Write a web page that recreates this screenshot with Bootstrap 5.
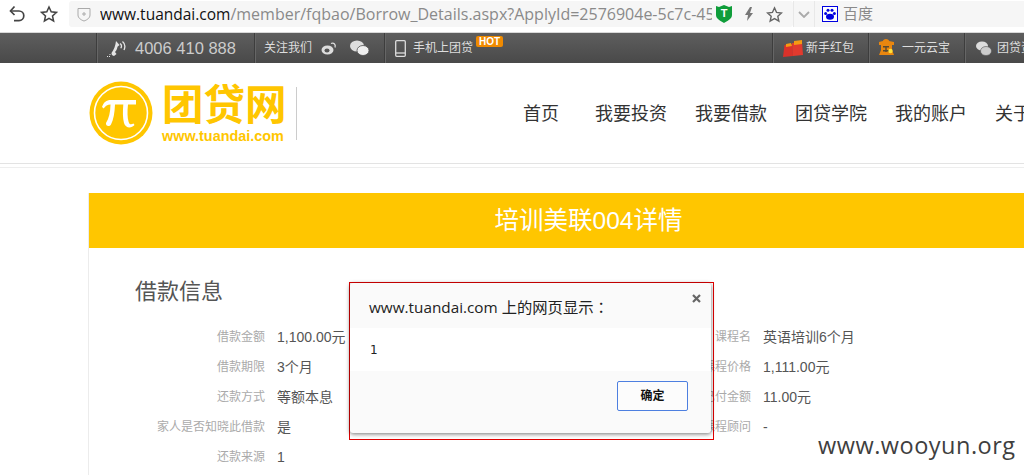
<!DOCTYPE html>
<html lang="zh-CN">
<head>
    <meta charset="UTF-8">
    <title>培训美联004详情</title>
    <link href="https://cdn.jsdelivr.net/npm/bootstrap@5.3.0/dist/css/bootstrap.min.css" rel="stylesheet">
    <style>
        html, body {
            width: 1024px;
            height: 475px;
            overflow: hidden;
        }
        body {
            position: relative;
            background-color: #fff;
            font-family: "Liberation Sans", "Noto Sans CJK SC", sans-serif;
            color: #555;
        }
        .browser-bar {
            height: 33px;
            padding: 1px 0 5px;
            background: #fff;
            border-bottom: 1px solid #d9d9d9;
        }
        .nav-btns {
            width: 69px;
            padding-left: 8px;
            gap: 14px;
        }
        .url-box {
            width: 724px;
            height: 26px;
            background: #f6f6f6;
            border-radius: 3px;
        }
        .url-text {
            width: 612px;
            margin-left: 9px;
            overflow: hidden;
            white-space: nowrap;
            font-family: "Open Sans", "Noto Sans", sans-serif;
            font-size: 16px;
            color: #8a8a8a;
        }
        .url-text b {
            font-size: 15.5px;
            font-weight: 400;
            color: #111;
        }
        .url-tools {
            gap: 12px;
            margin-left: 3px;
        }
        .drop-cell {
            width: 22px;
            height: 26px;
            background: #f6f6f6;
            border-left: 1px solid #e8e8e8;
            border-right: 1px solid #e8e8e8;
        }
        .search-box {
            flex: 1;
            height: 26px;
            background: #f6f6f6;
            padding-left: 7px;
            gap: 5px;
            font-size: 15px;
            color: #8a8a8a;
        }
        .top-strip {
            height: 30px;
            background: linear-gradient(#5e5e5e, #494949);
            color: #ddd;
            font-size: 12px;
            white-space: nowrap;
        }
        .strip-left {
            margin-left: 96px;
        }
        .strip-cell {
            height: 30px;
            border-left: 1px solid #3d3d3d;
            box-shadow: inset 1px 0 0 #666;
        }
        .strip-phone {
            width: 158px;
            padding-left: 10px;
            gap: 8px;
            font-size: 16.5px;
            color: #ccc;
        }
        .strip-follow {
            width: 130px;
            padding-left: 9px;
            gap: 9px;
        }
        .strip-app {
            padding-left: 10px;
            gap: 7px;
            position: relative;
        }
        .hot-tag {
            position: absolute;
            left: 91px;
            top: 3px;
            background: #f08a00;
            color: #fff;
            font-size: 10px;
            font-weight: 700;
            line-height: 11px;
            padding: 0 3px;
            border-radius: 2px;
        }
        .strip-right {
            margin-left: auto;
        }
        .strip-bonus {
            width: 96px;
            padding-left: 10px;
            gap: 3px;
        }
        .strip-yuan {
            width: 96px;
            padding-left: 9px;
            gap: 7px;
        }
        .strip-group {
            width: 60px;
            padding-left: 11px;
            gap: 5px;
            overflow: hidden;
        }
        .site-head {
            height: 101px;
            border-bottom: 1px solid #e3e3e3;
            padding-left: 89px;
            overflow: hidden;
            white-space: nowrap;
        }
        .logo-mark {
            flex-shrink: 0;
        }
        .logo-words {
            flex-shrink: 0;
            margin-left: 9px;
            width: 124px;
            color: #ffc600;
        }
        .logo-cn {
            font-size: 41.5px;
            line-height: 45px;
            font-weight: 700;
        }
        .logo-en {
            font-size: 14.4px;
            line-height: 16px;
            font-weight: 700;
        }
        .logo-rule {
            flex-shrink: 0;
            width: 1px;
            height: 53px;
            margin-left: 10px;
            background: #ccc;
        }
        .main-nav {
            flex-shrink: 0;
            margin-left: 226px;
            margin-top: 2px;
            gap: 28px;
            font-size: 18px;
            color: #333;
        }
        .main-nav .first-item {
            margin-right: 8px;
        }
        .head-gap {
            height: 26px;
            border-top: 1px solid #eee;
            margin-top: 3px;
            background: #fff;
        }
        .detail-panel {
            margin-left: 88px;
            border-left: 1px solid #ececec;
            height: 300px;
        }
        .panel-title {
            height: 55px;
            padding-left: 64px;
            background: #ffc600;
            color: #fff;
            font-size: 24.5px;
            line-height: 55px;
            text-align: center;
        }
        .panel-body {
            padding: 28px 0 0 46px;
        }
        .section-name {
            font-size: 22px;
            line-height: 32px;
            color: #555;
            margin: 0 0 14px;
            font-weight: 400;
        }
        .info-col {
            flex: 0 0 490px;
        }
        .info-col + .info-col {
            flex: 1;
        }
        .info-row {
            height: 30px;
            line-height: 30px;
            white-space: nowrap;
        }
        .info-label {
            width: 130px;
            margin-right: 12px;
            text-align: right;
            font-size: 12px;
            color: #aaa;
        }
        .info-col + .info-col .info-label {
            width: 126px;
        }
        .info-value {
            font-size: 14px;
            color: #555;
        }
        .alert-outline {
            position: absolute;
            left: 349px;
            top: 282px;
            width: 365px;
            height: 158px;
            border: 1px solid #e00000;
        }
        .alert-box {
            width: 361px;
            height: 150px;
            background: #fafafa;
            border-radius: 3px;
            box-shadow: 0 1px 4px rgba(0, 0, 0, .55);
            position: relative;
            font-family: "Open Sans", "Noto Sans CJK TC", sans-serif;
        }
        .alert-head {
            height: 45px;
            padding: 14px 0 0 19px;
            font-size: 15.3px;
            line-height: 20px;
            color: #222;
        }
        .alert-close {
            position: absolute;
            right: 9px;
            top: 10px;
            width: 11px;
            height: 11px;
        }
        .alert-msg {
            height: 43px;
            background: #fff;
            padding: 12px 0 0 20px;
            font-family: "DejaVu Sans", sans-serif;
            font-size: 12px;
            line-height: 20px;
            color: #222;
        }
        .alert-foot {
            padding: 10px 23px 0 0;
            text-align: right;
        }
        .alert-ok {
            width: 71px;
            height: 30px;
            padding: 0;
            font-size: 12px;
            font-weight: 700;
            color: #111;
            background: #fcfcfc;
            border: 1px solid #4d7fe0;
            border-radius: 2px;
        }
        .mark-text {
            position: absolute;
            left: 818px;
            top: 430px;
            font-family: "Open Sans", "Noto Sans", sans-serif;
            font-size: 23.5px;
            line-height: 30px;
            color: #3f3f3f;
            letter-spacing: .5px;
        }
    </style>
</head>
<body>
    <!-- browser toolbar -->
    <div class="browser-bar d-flex align-items-center">
        <div class="nav-btns d-flex align-items-center">
            <svg width="18" height="18" viewBox="0 0 18 18" fill="none" stroke="#444" stroke-width="1.7"><path d="M6.500 1.500L2.500 6l4 4"/><path d="M3 6h8a4.800 4.800 0 0 1 0 9.600H6"/></svg>
            <svg width="18" height="18" viewBox="0 0 18 18" fill="none" stroke="#444" stroke-width="1.5"><path d="M9 2l2.200 4.800 5.200.6-3.900 3.500 1.100 5.100L9 13.400 4.400 16l1.100-5.100-3.900-3.500 5.200-.6z"/></svg>
        </div>
        <div class="url-box d-flex align-items-center">
            <svg class="ms-2" width="14" height="16" viewBox="0 0 14 16" fill="none" stroke="#aaa"><path d="M1 2.500h12V9c0 3-3 5-6 6-3-1-6-3-6-6z"/><path d="M7 6v4M5 8h4"/></svg>
            <div class="url-text"><b>www.tuandai.com</b>/member/fqbao/Borrow_Details.aspx?ApplyId=2576904e-5c7c-45</div>
            <div class="url-tools d-flex align-items-center">
                <svg width="18" height="20" viewBox="0 0 18 20"><path d="M1 2l3 1 5-2 5 2 3-1 0 9c0 4-5 6-8 8-3-2-8-4-8-8z" fill="#0f9d3a"/><text x="9" y="13" text-anchor="middle" font-size="11" font-weight="700" fill="#fff" font-family="Liberation Sans">T</text></svg>
                <svg width="9" height="14" viewBox="0 0 9 14"><path d="M5 0L0 8h3l-1 6 6-8H5l2-6z" fill="#777"/></svg>
                <svg width="17" height="17" viewBox="0 0 18 18" fill="none" stroke="#666" stroke-width="1.5"><path d="M9 2l2.200 4.800 5.200.6-3.900 3.500 1.100 5.100L9 13.400 4.400 16l1.100-5.100-3.900-3.500 5.200-.6z"/></svg>
            </div>
        </div>
        <div class="drop-cell d-flex align-items-center justify-content-center">
            <svg width="12" height="7" viewBox="0 0 12 7" fill="none" stroke="#aaa" stroke-width="1.8"><path d="M1 1l5 5 5-5"/></svg>
        </div>
        <div class="search-box d-flex align-items-center">
            <svg width="16" height="16" viewBox="0 0 16 16"><rect x=".5" y=".5" width="15" height="15" fill="#fff" stroke="#0000e0"/><g fill="#0000e0"><ellipse cx="8" cy="10.800" rx="4" ry="3"/><circle cx="3.600" cy="7.500" r="1.500"/><circle cx="12.400" cy="7.500" r="1.500"/><circle cx="6" cy="4.300" r="1.500"/><circle cx="10" cy="4.300" r="1.500"/></g></svg>
            <span>百度</span>
        </div>
    </div>

    <!-- site top strip -->
    <div class="top-strip d-flex">
        <div class="strip-left d-flex">
            <div class="strip-cell strip-phone d-flex align-items-center">
                <svg width="20" height="17" viewBox="0 0 20 17" fill="none" stroke="#e4e4e4"><path d="M9 1l3.500 4-2 1.800c-.3 2.200-1.200 4-2.500 5.200l1.500 2-2.500 2c-2-.3-2.500-1.500-2.500-3C7 9.500 8.500 5.500 9 1z" fill="#e4e4e4" stroke="none"/><path d="M13 3.500c1.500 1 1.800 3 .8 4.800M15.500 1.500c2.500 2 2.800 5.500 1.500 8.500" stroke-width="1.300"/><path d="M0 16.500h1M2 16.500h1M2.500 14.500h1" stroke-width="1"/></svg>
                <span>4006 410 888</span>
            </div>
            <div class="strip-cell strip-follow d-flex align-items-center">
                <span>关注我们</span>
                <svg width="16" height="13" viewBox="0 0 16 13"><ellipse cx="6.500" cy="8" rx="6" ry="4.500" fill="#ddd"/><ellipse cx="6" cy="8.500" rx="2.500" ry="2" fill="#555"/><path d="M10 1.500c3-1 5 1 4 4" fill="none" stroke="#ddd" stroke-width="1.300"/></svg>
                <svg class="ms-1" width="19" height="16" viewBox="0 0 19 16"><ellipse cx="7" cy="6" rx="7" ry="5.500" fill="#ddd"/><ellipse cx="13" cy="10.500" rx="6" ry="5" fill="#eee" stroke="#4f4f4f" stroke-width=".8"/></svg>
            </div>
            <div class="strip-cell strip-app d-flex align-items-center">
                <svg width="11" height="17" viewBox="0 0 11 17" fill="none" stroke="#ddd" stroke-width="1.300"><rect x=".7" y=".7" width="9.600" height="15.600" rx="1"/><path d="M1 13h9"/></svg>
                <span>手机上团贷</span>
                <span class="hot-tag">HOT</span>
            </div>
        </div>
        <div class="strip-right d-flex">
            <div class="strip-cell strip-bonus d-flex align-items-center">
                <svg width="20" height="17" viewBox="0 0 20 17"><path d="M1.500 5l8-1 .5 12-10 1z" fill="#d9322a"/><path d="M9 3l10-1 1 13-10 1z" fill="#e23a2e"/><path d="M3 4l5-1 1 3-6 1zM11 1l8-1v4l-8 1z" fill="#f59a12"/></svg>
                <span>新手红包</span>
            </div>
            <div class="strip-cell strip-yuan d-flex align-items-center">
                <svg width="17" height="18" viewBox="0 0 17 18"><path d="M8 0c2 0 3 1 3 2l5 1v3h-2v5l2 5H1l2-5V6H1V3l4-1c0-1 1-2 3-2z" fill="#e8860f"/><path d="M5 7h6v1.500H5zM5 11h6v1.500H5zM7.300 7h1.400v6H7.300z" fill="#5a4a30"/><circle cx="12.500" cy="12" r="2.200" fill="#ffe23a"/></svg>
                <span>一元云宝</span>
            </div>
            <div class="strip-cell strip-group d-flex align-items-center">
                <svg class="flex-shrink-0" width="16" height="15" viewBox="0 0 16 15"><ellipse cx="6" cy="5" rx="6" ry="4.500" fill="#ddd"/><ellipse cx="10" cy="10" rx="5.500" ry="4.500" fill="#ccc" stroke="#555" stroke-width=".6"/></svg>
                <span>团贷资讯</span>
            </div>
        </div>
    </div>

    <!-- site header -->
    <div class="site-head d-flex align-items-center">
        <svg class="logo-mark" width="64" height="64" viewBox="0 0 64 64">
            <circle cx="32" cy="32" r="31.500" fill="#ffc600"/>
            <circle cx="32" cy="32" r="26.500" fill="none" stroke="#fff" stroke-width="1.600"/>
            <path d="M13 26c2-5 4-7 9-7h25v4.500H39c-.8 7-.6 13 .5 17 .8 3 2.500 3.500 5 2l1 1.500c-3 3.500-9 3.500-10.500-2-1.300-5-1.300-11-.7-18.500H26c-.3 8-1.500 15-4 20-1.500 2.500-5.500 2-5-1.500 3-4.500 4.300-10.500 4.500-18.500-3 0-5 1.500-6.800 4z" fill="#fff"/>
        </svg>
        <div class="logo-words">
            <div class="logo-cn">团贷网</div>
            <div class="logo-en">www.tuandai.com</div>
        </div>
        <div class="logo-rule"></div>
        <nav class="main-nav d-flex">
            <span class="first-item">首页</span>
            <span>我要投资</span>
            <span>我要借款</span>
            <span>团贷学院</span>
            <span>我的账户</span>
            <span>关于我们</span>
        </nav>
    </div>
    <div class="head-gap"></div>

    <!-- detail panel -->
    <div class="detail-panel">
        <div class="panel-title">培训美联004详情</div>
        <div class="panel-body">
            <h2 class="section-name">借款信息</h2>
            <div class="d-flex">
                <div class="info-col">
                    <div class="info-row d-flex"><span class="info-label">借款金额</span><span class="info-value">1,100.00元</span></div>
                    <div class="info-row d-flex"><span class="info-label">借款期限</span><span class="info-value">3个月</span></div>
                    <div class="info-row d-flex"><span class="info-label">还款方式</span><span class="info-value">等额本息</span></div>
                    <div class="info-row d-flex"><span class="info-label">家人是否知晓此借款</span><span class="info-value">是</span></div>
                    <div class="info-row d-flex"><span class="info-label">还款来源</span><span class="info-value">1</span></div>
                </div>
                <div class="info-col">
                    <div class="info-row d-flex"><span class="info-label">课程名</span><span class="info-value">英语培训6个月</span></div>
                    <div class="info-row d-flex"><span class="info-label">课程价格</span><span class="info-value">1,111.00元</span></div>
                    <div class="info-row d-flex"><span class="info-label">已付金额</span><span class="info-value">11.00元</span></div>
                    <div class="info-row d-flex"><span class="info-label">课程顾问</span><span class="info-value">-</span></div>
                </div>
            </div>
        </div>
    </div>

    <!-- alert dialog with red annotation box -->
    <div class="alert-outline">
        <div class="alert-box">
            <div class="alert-head" lang="zh-TW">www.tuandai.com 上的网页显示：</div>
            <svg class="alert-close" viewBox="0 0 11 11" stroke="#666" stroke-width="2.200"><path d="M2 2l7 7M9 2l-7 7"/></svg>
            <div class="alert-msg">1</div>
            <div class="alert-foot"><button type="button" class="btn alert-ok">确定</button></div>
        </div>
    </div>

    <div class="mark-text">www.wooyun.org</div>

    <script src="https://cdn.jsdelivr.net/npm/bootstrap@5.3.0/dist/js/bootstrap.bundle.min.js"></script>
</body>
</html>
